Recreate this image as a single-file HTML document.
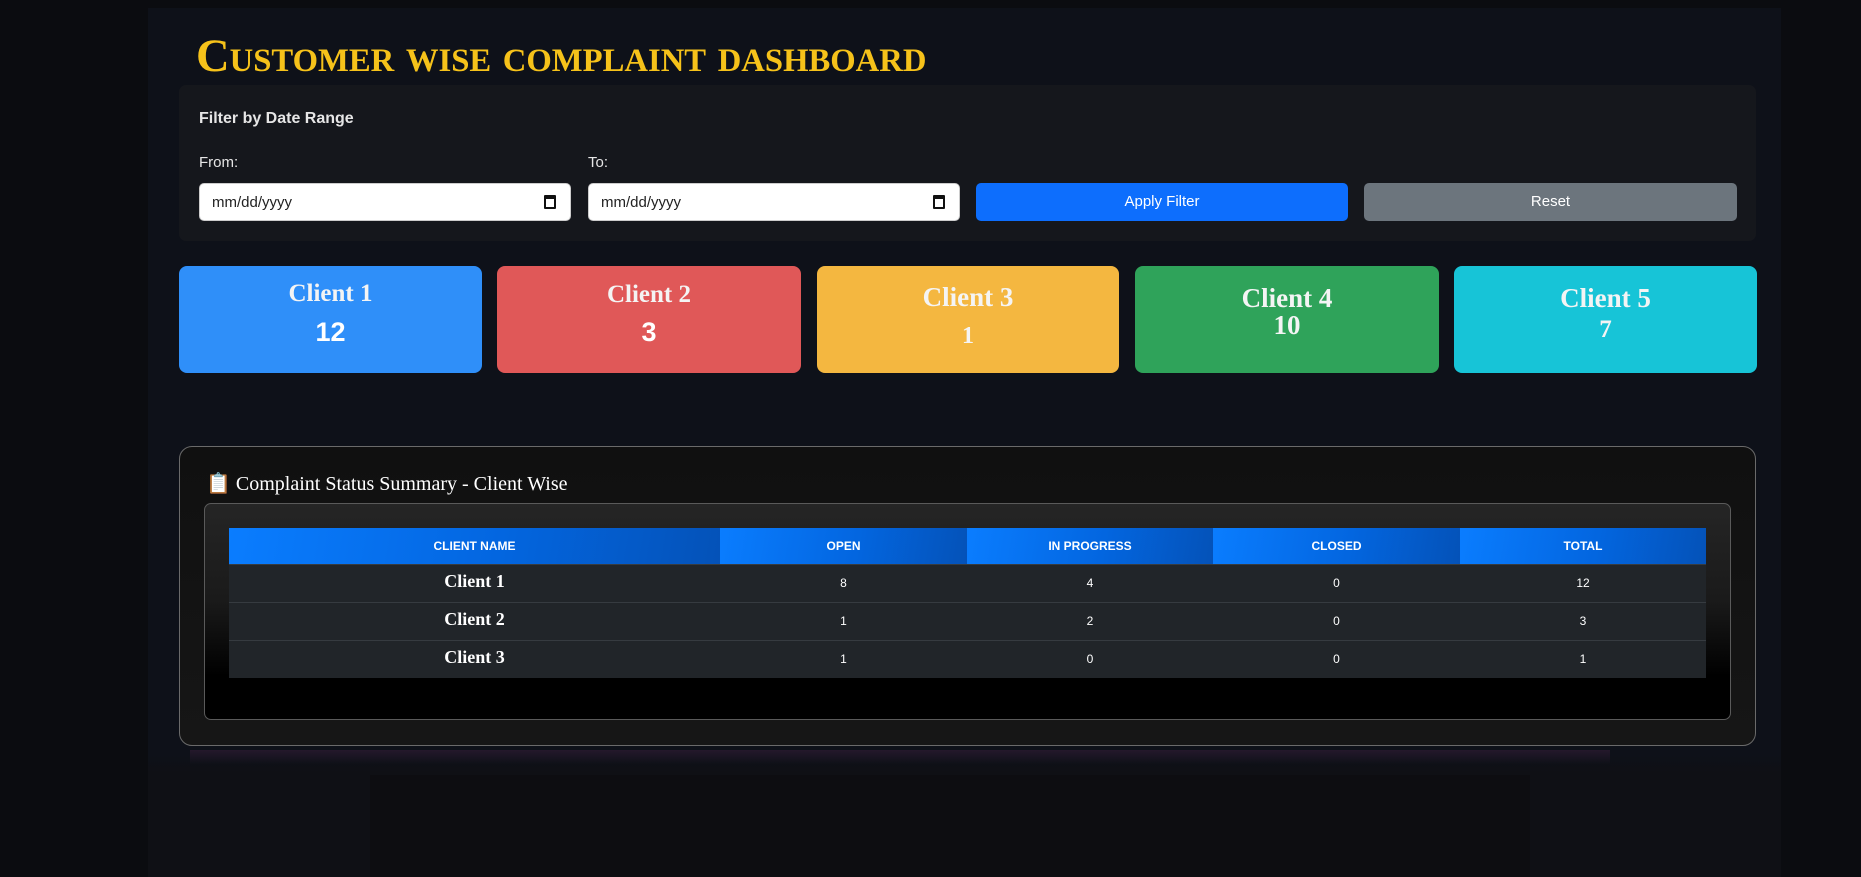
<!DOCTYPE html>
<html><head><meta charset="utf-8"><style>
*{box-sizing:border-box;margin:0;padding:0}
body{width:1861px;height:877px;background:#0b0c10;position:relative;overflow:hidden;font-family:"Liberation Sans",sans-serif;color:#fff}
.abs{position:absolute}
.wrap{left:148px;top:8px;width:1633px;height:869px;background:linear-gradient(#0e1119 0%,#0e1119 86%,#0f1015 88%,#0f1015 100%)}
.title{left:196px;top:29px;font-family:"Liberation Serif",serif;font-weight:bold;font-variant:small-caps;font-size:47px;color:#f6c21a;letter-spacing:0px;white-space:nowrap;transform:scaleX(0.99);transform-origin:left}
.filter{left:179px;top:85px;width:1577px;height:156px;background:#15171c;border-radius:7px}
.lbl{font-size:15px;color:#e6e6e6}
.inp{height:38px;background:#fff;border-radius:5px;color:#222;font-size:15px;padding:10px 12px;border:1px solid #ccc}
.cal{position:absolute;right:14px;top:11px;width:12px;height:14px;border:2px solid #111;border-top-width:4px;border-radius:1px}
.btn{height:38px;border-radius:5px;font-size:15px;text-align:center;line-height:38px;color:#fff}
.card{top:266px;height:107px;border-radius:8px;text-align:center}
.ct{font-family:"Liberation Serif",serif;font-weight:bold;font-size:25px;color:#f4f4f4}
.num{font-weight:bold;font-size:27px}
.panel{left:179px;top:446px;width:1577px;height:300px;border:1px solid #6a6a6a;border-radius:13px;background:linear-gradient(#101010,#161616)}
.inner{left:204px;top:503px;width:1527px;height:217px;border:1px solid #5a5a5a;border-radius:7px;background:linear-gradient(#252525 0%,#1a1a1a 45%,#000 80%,#000)}
table{position:absolute;left:229px;top:528px;width:1477px;border-collapse:collapse}
th{height:36px;font-size:12px;font-weight:bold;background:linear-gradient(100deg,#0a7dff 0%,#0366e0 55%,#0452b8 100%);color:#fff}
td{background:#212529;border-top:1px solid #363b40;text-align:center;font-size:12px;height:38px}
td.n{font-family:"Liberation Serif",serif;font-weight:bold;font-size:18px;padding-bottom:4px}
</style></head><body>
<div class="abs wrap"></div>
<div class="abs" style="left:370px;top:775px;width:1160px;height:102px;background:#0d0d11"></div>
<div class="abs title">Customer wise complaint dashboard</div>
<div class="abs filter"></div>
<div class="abs lbl" style="left:199px;top:110px;font-weight:bold;font-size:16px">Filter by Date Range</div>
<div class="abs lbl" style="left:199px;top:154px">From:</div>
<div class="abs lbl" style="left:588px;top:154px">To:</div>
<div class="abs inp" style="left:199px;top:183px;width:372px">mm/dd/yyyy<span class="cal"></span></div>
<div class="abs inp" style="left:588px;top:183px;width:372px">mm/dd/yyyy<span class="cal"></span></div>
<div class="abs btn" style="left:976px;top:183px;width:372px;background:#0d6efd">Apply Filter</div>
<div class="abs btn" style="left:1364px;top:183px;width:373px;background:#6c757d">Reset</div>

<div class="abs card" style="left:179px;width:303px;background:#2f8ff9"><div class="ct" style="margin-top:14px">Client 1</div><div class="num" style="margin-top:9px">12</div></div>
<div class="abs card" style="left:497px;width:304px;background:#e05858"><div class="ct" style="margin-top:15px">Client 2</div><div class="num" style="margin-top:8px">3</div></div>
<div class="abs card" style="left:817px;width:302px;background:#f4b740"><div class="ct" style="margin-top:16px;font-size:27px">Client 3</div><div class="ct" style="margin-top:10px;font-size:24px">1</div></div>
<div class="abs card" style="left:1135px;width:304px;background:#2fa35a"><div class="ct" style="margin-top:17px;font-size:27px">Client 4</div><div class="ct" style="font-size:27px;margin-top:-4px">10</div></div>
<div class="abs card" style="left:1454px;width:303px;background:#17c4d7"><div class="ct" style="margin-top:17px;font-size:27px">Client 5</div><div class="ct" style="font-size:25px;margin-top:2px">7</div></div>

<div class="abs panel"></div>
<div class="abs" style="left:206px;top:471px;font-family:'Liberation Serif',serif;font-size:20px;color:#fff;white-space:nowrap">📋 Complaint Status Summary - Client Wise</div>
<div class="abs inner"></div>
<table>
<tr><th style="width:491px">CLIENT NAME</th><th style="width:247px">OPEN</th><th style="width:246px">IN PROGRESS</th><th style="width:247px">CLOSED</th><th>TOTAL</th></tr>
<tr><td class="n">Client 1</td><td>8</td><td>4</td><td>0</td><td>12</td></tr>
<tr><td class="n">Client 2</td><td>1</td><td>2</td><td>0</td><td>3</td></tr>
<tr><td class="n">Client 3</td><td>1</td><td>0</td><td>0</td><td>1</td></tr>
</table>
<div class="abs" style="left:190px;top:750px;width:1420px;height:14px;background:linear-gradient(#2a1a30,rgba(20,15,25,0));opacity:.8"></div>
</body></html>
